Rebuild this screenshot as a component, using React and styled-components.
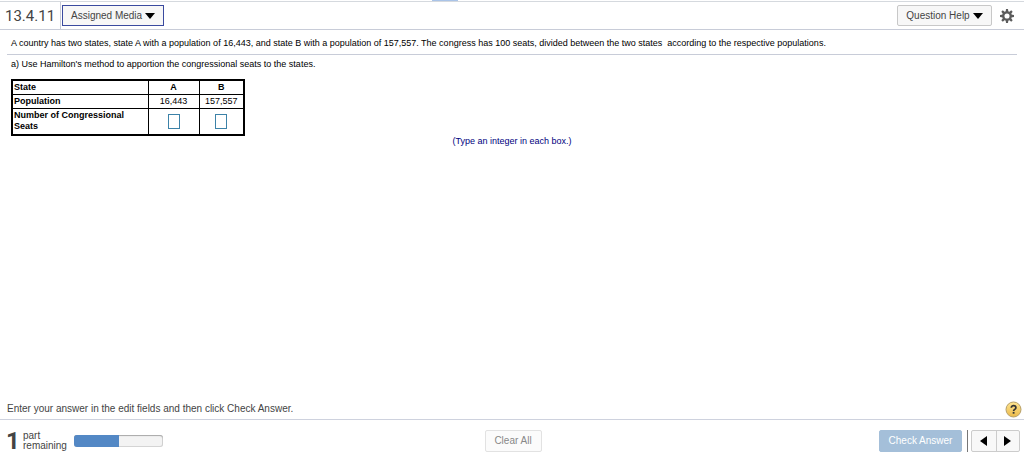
import styled, {createGlobalStyle} from 'styled-components'

const GlobalStyle = createGlobalStyle`
  * {
    box-sizing: border-box;
  }
  body {
    margin: 0;
    background: #fff;
    color: #000;
    font: 9px/12px "Liberation Sans", Arial, sans-serif;
  }
  button, input {
    font-family: inherit;
  }
`
const Page = styled.div`
  display: flex;
  flex-direction: column;
  min-height: 100vh;
`
const TabStrip = styled.div`
  display: flex;
  justify-content: center;
  height: 2px;
  border-bottom: 1px solid #d5d9de;
`
const TabHandle = styled.span`
  width: 26px;
  height: 1px;
  margin-right: 134px;
  background: #aac4e8;
`
const Header = styled.header`
  display: flex;
  align-items: center;
  height: 28px;
  padding: 0 10px 0 5px;
  border-bottom: 1px solid #c8ccd8;
`
const Title = styled.h1`
  align-self: stretch;
  margin: 0 1px 0 0;
  padding-right: 5px;
  border-right: 1px solid #c8ccd8;
  color: #444;
  font-family: Roboto, "Liberation Sans", sans-serif;
  font-size: 15px;
  font-weight: normal;
  line-height: 28px;
`
const MenuButton = styled.button`
  display: flex;
  align-items: center;
  justify-content: center;
  gap: 3px;
  width: ${props => props.$width};
  height: 21px;
  padding: 0;
  border: 1px solid ${props => props.$active ? '#3a4a9f' : '#c8c8c8'};
  border-radius: ${props => props.$active ? 0 : '2px'};
  background: #f7f7f7;
  color: #444;
  font-size: 10px;
`
const Tools = styled.div`
  display: flex;
  align-items: center;
  gap: 8px;
  margin-left: auto;
`
const IconButton = styled.button`
  display: flex;
  padding: 0;
  border: 0;
  background: none;
`
const Main = styled.main`
  flex: 1;
  padding: 0 7px;
`
const Intro = styled.p`
  margin: 0;
  padding: 7px 4px 5px;
  border-bottom: 1px solid #c8ccd8;
  white-space: pre-wrap;
`
const Part = styled.section`
  padding: 3px 4px 0;
`
const Prompt = styled.p`
  margin: 0 0 9px;
`
const Table = styled.table`
  border: 2px solid #000;
  border-collapse: collapse;
  line-height: 11px;
`
const Cell = styled.td`
  height: 14px;
  padding: 0;
  border: 1px solid #000;
  text-align: center;
`
const HeadCell = styled.th`
  width: ${props => props.$width};
  height: 14px;
  padding: 0 1px;
  border: 1px solid #000;
  text-align: ${props => props.$center ? 'center' : 'left'};
`
const Answer = styled.input`
  display: block;
  width: 12px;
  height: 15px;
  margin: 5px auto;
  padding: 0;
  border: 1px solid #3c82a8;
  font-size: 9px;
  text-align: center;
`
const Hint = styled.p`
  margin: 0;
  color: #000080;
  line-height: 10px;
  text-align: center;
`
const Message = styled.div`
  display: flex;
  align-items: center;
  justify-content: space-between;
  height: 20px;
  padding: 0 2px 0 7px;
  color: #444;
  font-size: 10px;
`
const Footer = styled.footer`
  display: grid;
  grid-template-columns: 1fr auto 1fr;
  align-items: center;
  height: 44px;
  padding: 0 4px 2px 6px;
  border-top: 1px solid #ced2de;
`
const Progress = styled.div`
  display: flex;
  align-items: center;
  color: #444;
`
const Count = styled.strong`
  width: 17px;
  font-family: Roboto, "Liberation Sans", sans-serif;
  font-size: 24px;
  line-height: 24px;
`
const Remaining = styled.span`
  width: 51px;
  font-size: 10px;
  line-height: 10px;
`
const Bar = styled.div`
  width: 89px;
  height: 12px;
  overflow: hidden;
  border-radius: 3px;
  background: #f3f3f3;
  box-shadow: inset 0 1px 1px #aaa, inset 0 0 0 1px #d4d4d4;
`
const BarFill = styled.div`
  height: 100%;
  background: #5388c5;
`
const ActionButton = styled.button`
  height: 22px;
  width: ${props => props.$primary ? '83px' : '57px'};
  padding: 0;
  border: 1px solid ${props => props.$primary ? '#a4bfd9' : '#e2e2e2'};
  border-radius: 2px;
  background: ${props => props.$primary ? '#a4bfd9' : '#fbfbfb'};
  color: ${props => props.$primary ? '#fff' : '#888'};
  font-size: 10px;
`
const Actions = styled.div`
  display: flex;
  align-items: center;
  justify-content: flex-end;
`
const Divider = styled.span`
  width: 1px;
  height: 22px;
  margin: 0 3px 0 5px;
  background: #777;
`
const Pager = styled.div`
  display: flex;
  height: 22px;
  border: 1px solid #ccc;
  border-radius: 2px;
  background: #f8f8f8;
`
const PageButton = styled.button`
  display: flex;
  align-items: center;
  justify-content: center;
  width: 24px;
  padding: 0;
  border: 0;
  background: none;

  & + & {
    width: 23px;
    border-left: 1px solid #ccc;
  }
`

const Arrow = ({points, size = 10}) => (
  <svg width={size} height={size} viewBox="0 0 10 10" aria-hidden="true">
    <polygon points={points}/>
  </svg>
)

const GearIcon = () => (
  <svg width="14" height="14" viewBox="0 0 14 14" aria-hidden="true">
    {[0, 45, 90, 135, 180, 225, 270, 315].map(angle => (
      <path key={angle} d="M5.6 3 6 0h2l.4 3z" fill="#5c5c5c" transform={`rotate(${angle} 7 7)`}/>
    ))}
    <circle cx="7" cy="7" r="3.7" fill="none" stroke="#5c5c5c" strokeWidth="2.3"/>
  </svg>
)

const HelpIcon = () => (
  <svg width="17" height="17" viewBox="0 0 17 17" aria-hidden="true">
    <defs>
      <linearGradient id="gold" x1="0" y1="0" x2="0" y2="1">
        <stop offset="0" stopColor="#ffe591"/>
        <stop offset="1" stopColor="#eab94a"/>
      </linearGradient>
    </defs>
    <circle cx="8.5" cy="8.5" r="7.5" fill="url(#gold)" stroke="#b6a06a"/>
    <path d="M6.3 6.8c0-2.8 4.6-2.8 4.6 0 0 1.6-2.3 1.5-2.3 3.2" fill="none" stroke="#333" strokeWidth="1.7"/>
    <rect x="7.7" y="10.9" width="1.8" height="1.8" fill="#333"/>
  </svg>
)

const states = [
  {name: 'A', population: '16,443', width: '51px'},
  {name: 'B', population: '157,557', width: '45px'}
]
const done = 1
const total = 2

const App = () => (
  <>
    <GlobalStyle/>
    <Page>
      <TabStrip><TabHandle/></TabStrip>
      <Header>
        <Title>13.4.11</Title>
        <MenuButton type="button" $active $width="102px">
          Assigned Media <Arrow points="0,2 10,2 5,8"/>
        </MenuButton>
        <Tools>
          <MenuButton type="button" $width="95px">
            Question Help <Arrow points="0,2 10,2 5,8"/>
          </MenuButton>
          <IconButton type="button" aria-label="Settings"><GearIcon/></IconButton>
        </Tools>
      </Header>
      <Main>
        <Intro>
          A country has two states, state A with a population of 16,443, and state B with a population of 157,557. The congress has 100 seats, divided between the two states{'  '}according to the respective populations.
        </Intro>
        <Part>
          <Prompt>a) Use Hamilton's method to apportion the congressional seats to the states.</Prompt>
          <Table>
            <thead>
              <tr>
                <HeadCell scope="col" $width="136px">State</HeadCell>
                {states.map(s => <HeadCell key={s.name} scope="col" $center $width={s.width}>{s.name}</HeadCell>)}
              </tr>
            </thead>
            <tbody>
              <tr>
                <HeadCell scope="row">Population</HeadCell>
                {states.map(s => <Cell key={s.name}>{s.population}</Cell>)}
              </tr>
              <tr>
                <HeadCell scope="row">Number of Congressional Seats</HeadCell>
                {states.map(s => (
                  <Cell key={s.name}>
                    <Answer type="text" aria-label={`Number of Congressional Seats, state ${s.name}`}/>
                  </Cell>
                ))}
              </tr>
            </tbody>
          </Table>
          <Hint>(Type an integer in each box.)</Hint>
        </Part>
      </Main>
      <Message>
        Enter your answer in the edit fields and then click Check Answer.
        <IconButton type="button" aria-label="Help"><HelpIcon/></IconButton>
      </Message>
      <Footer>
        <Progress>
          <Count>1</Count>
          <Remaining>part remaining</Remaining>
          <Bar role="progressbar" aria-label="Progress" aria-valuenow={done} aria-valuemax={total}>
            <BarFill style={{width: `${done / total * 100}%`}}/>
          </Bar>
        </Progress>
        <ActionButton type="button">Clear All</ActionButton>
        <Actions>
          <ActionButton type="button" $primary>Check Answer</ActionButton>
          <Divider/>
          <Pager>
            <PageButton type="button" aria-label="Previous"><Arrow points="8,0 8,10 1,5"/></PageButton>
            <PageButton type="button" aria-label="Next"><Arrow points="1,0 1,10 8,5"/></PageButton>
          </Pager>
        </Actions>
      </Footer>
    </Page>
  </>
)

export default App
